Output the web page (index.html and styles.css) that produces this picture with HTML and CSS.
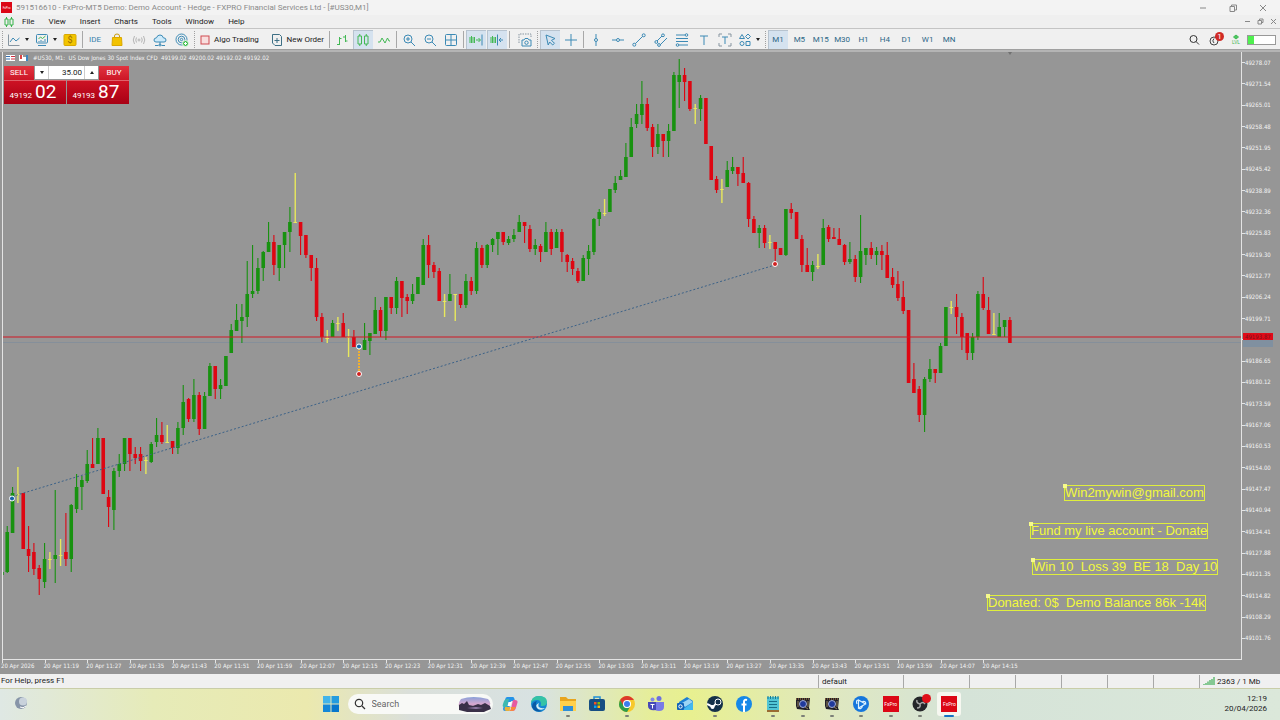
FILE: index.html
```html
<!DOCTYPE html>
<html lang="en">
	<head>
		<meta charset="utf-8">
		<title>FxPro-MT5 Demo - [#US30,M1]</title>
		<link rel="stylesheet" href="styles.css">
	</head>

	<body>
		<header class="titlebar">
			<span class="fxpro fxpro_small">FxPro</span>
			<h1 class="title_text">591516610 - FxPro-MT5 Demo: Demo Account - Hedge - FXPRO Financial Services Ltd - [#US30,M1]</h1>
			<div class="win_controls">
				<button aria-label="Minimize"><svg width="8" height="8"><path d="M1 4h6"/></svg></button>
				<button aria-label="Restore"><svg width="8" height="8"><path d="M1 2.5h4.5v5h-4.5zM2.5 2.5v-1.5h5v5h-2"/></svg></button>
				<button aria-label="Close"><svg width="8" height="8"><path d="M1 1l6 6M7 1l-6 6"/></svg></button>
			</div>
		</header>

		<nav class="menubar">
			<svg class="menu_logo" width="10" height="10"><path d="M1 2h3v6h-3zM6 2h3v6h-3zM2.5 0v2M2.5 8v2M7.5 0v2M7.5 8v2"/></svg>
			<button>File</button>
			<button>View</button>
			<button>Insert</button>
			<button>Charts</button>
			<button>Tools</button>
			<button>Window</button>
			<button>Help</button>
			<div class="doc_controls">
				<button aria-label="Minimize chart"><svg width="7" height="7"><path d="M1 3.5h5"/></svg></button>
				<button aria-label="Restore chart"><svg width="7" height="7"><path d="M1 2.5h3.5v3.5h-3.5zM2.5 2.5v-1.5h3.5v3.5h-1.5"/></svg></button>
				<button aria-label="Close chart"><svg width="7" height="7"><path d="M1 1l5 5M6 1l-5 5"/></svg></button>
			</div>
		</nav>

		<div class="toolbar">
			<span class="grip"></span>
			<div class="tools tools_file">
				<button class="tool tool_drop" aria-label="New chart">
					<svg width="14" height="14"><path class="gray" d="M1.5 1.5v11M1.5 12.5h11"/><path d="M3 9l3-4 3 3 3.5-3"/></svg><i class="arrow"></i>
				</button>
				<button class="tool tool_drop" aria-label="Profiles">
					<svg width="14" height="14"><rect x="1.5" y="1.5" width="11" height="8.5" rx="1"/><path d="M3 12.5h8"/><path class="green" d="M3.5 6l2-2 2 1.5 3-2.5"/><path d="M4 9v-1M6 9v-2M8 9v-1M10 9v-3"/></svg><i class="arrow"></i>
				</button>
				<button class="tool" aria-label="Deposit">
					<svg width="14" height="14"><rect x="1" y="1.5" width="12" height="11" rx="1" fill="#f2c500" stroke="#d9a800"/><text x="7" y="10" text-anchor="middle" class="dollar">$</text></svg>
				</button>
			</div>
			<span class="sep"></span>
			<div class="tools tools_market">
				<button class="tool tool_ide">IDE</button>
				<button class="tool" aria-label="Market">
					<svg width="14" height="14"><path d="M4.5 5v-2q0-2 2.5-2t2.5 2v2" stroke="#c99a10"/><path d="M2.5 4.5h9l.5 8h-10z" fill="#f2c200" stroke="#dba800"/></svg>
				</button>
				<button class="tool" aria-label="Signals">
					<svg width="14" height="14"><g stroke="#b5b5b5"><circle cx="7" cy="7" r="1"/><path d="M4.5 4.5q-1.5 2.5 0 5M9.5 4.5q1.5 2.5 0 5M2.5 3q-2.5 4 0 8M11.5 3q2.5 4 0 8"/></g></svg>
				</button>
				<button class="tool" aria-label="VPS">
					<svg width="14" height="14"><path d="M3 9q-2 0-2-2t2.5-2.2q.8-2.8 3.5-2.8t3.3 2.8q2.7 0 2.7 2.2t-2 2z" fill="#cdeafa"/><path d="M7 9v3M2 12.5h3.5M8.5 12.5h3.5"/><circle cx="7" cy="12" r="1"/></svg>
				</button>
				<button class="tool" aria-label="Network">
					<svg width="14" height="14"><circle cx="6.5" cy="6.5" r="5.5"/><circle cx="6.5" cy="6.5" r="3.3"/><circle cx="6.5" cy="6.5" r="1.2"/><circle cx="10.5" cy="10.5" r="3" fill="#3fc050" stroke="#eaf7ea"/><path d="M9 10.5h3M10.5 9v3" stroke="#fff"/></svg>
				</button>
			</div>
			<span class="grip"></span>
			<div class="tools tools_trade">
				<button class="tool tool_text"><svg width="14" height="14"><rect x="3" y="3" width="8" height="8" fill="#f8dede" stroke="#cf4a50"/></svg>Algo Trading</button>
				<button class="tool tool_text"><svg width="14" height="14"><path d="M2.5 1.5h7l2 2v9h-6.5l-2.5-2.5z" stroke="#3d6f85"/><path d="M7 5v5M4.5 7.5h5" stroke="#3d6f85"/></svg>New Order</button>
			</div>
			<span class="sep"></span>
			<div class="tools tools_3">
				<button class="tool" aria-label="Bar chart"><svg width="14" height="14"><path class="green" d="M4.5 4v8M2 11.5h2.5M4.5 5.5h2M10.5 2v7M8 4h2.5M10.5 8h2"/></svg></button>
				<button class="tool active" aria-label="Candlesticks"><svg width="14" height="14"><path class="green" d="M2 3h3.5v8h-3.5zM8.5 3h3.5v8h-3.5zM3.75 1v2M3.75 11v2M10.25 1v2M10.25 11v2"/></svg></button>
				<button class="tool" aria-label="Line chart"><svg width="14" height="14"><path class="green" d="M1 9h2l2-4 3 5 2.5-5 1.5 3h1"/></svg></button>
			</div>
			<span class="sep"></span>
			<div class="tools tools_3">
				<button class="tool" aria-label="Zoom in"><svg width="14" height="14"><circle cx="6" cy="6" r="4"/><path d="M9 9l4 4M4 6h4M6 4v4"/></svg></button>
				<button class="tool" aria-label="Zoom out"><svg width="14" height="14"><circle cx="6" cy="6" r="4"/><path d="M9 9l4 4M4 6h4"/></svg></button>
				<button class="tool" aria-label="Tile windows"><svg width="14" height="14"><rect x="1.5" y="1.5" width="11" height="11" rx="1"/><path d="M7 1.5v11M1.5 7h11"/></svg></button>
			</div>
			<span class="sep"></span>
			<div class="tools tools_2">
				<button class="tool active" aria-label="Auto scroll"><svg width="14" height="14"><path class="green" d="M1 4v6M2.5 3v7M4 4v6M5.5 4v6M7 7h4M9.5 5l2 2-2 2"/><path d="M13 1.5v11"/></svg></button>
				<button class="tool active" aria-label="Chart shift"><svg width="14" height="14"><path class="green" d="M1 4v6M2.5 3v7M4 4v6M5.5 4v6"/><path d="M7.5 1.5v11M13 7h-4M11 5l-2 2 2 2"/></svg></button>
			</div>
			<span class="sep"></span>
			<div class="tools tools_1">
				<button class="tool" aria-label="Screenshot"><svg width="14" height="14"><path d="M1 10v-9h12v4" stroke-dasharray="1.5 1" class="gray"/><path d="M4 7h2l1-1.5h3l1 1.5h2v6h-9z"/><circle cx="8.5" cy="9.7" r="1.7"/></svg></button>
			</div>
			<span class="grip"></span>
			<div class="tools tools_2">
				<button class="tool active" aria-label="Cursor"><svg width="14" height="14"><path d="M3 2l9 3.5-3.5 1.8 3 3-1.8 1.7-3-3-1.5 3z"/></svg></button>
				<button class="tool" aria-label="Crosshair"><svg width="14" height="14"><path d="M7 1v12M1 7h12"/></svg></button>
			</div>
			<span class="sep"></span>
			<div class="tools tools_draw">
				<button class="tool" aria-label="Vertical line"><svg width="14" height="14"><path d="M7 1v4.5M7 8.5v4.5"/><circle cx="7" cy="7" r="1.5"/></svg></button>
				<button class="tool" aria-label="Horizontal line"><svg width="14" height="14"><path d="M1 7h4.5M8.5 7h4.5"/><circle cx="7" cy="7" r="1.5"/></svg></button>
				<button class="tool" aria-label="Trendline"><svg width="14" height="14"><path d="M3.3 10.7l7.4-7.4"/><circle cx="2.3" cy="11.7" r="1.5"/><circle cx="11.7" cy="2.3" r="1.5"/></svg></button>
				<button class="tool" aria-label="Channel"><svg width="14" height="14"><path d="M3 8l5-5M6 12l7-7"/><circle cx="2.3" cy="9" r="1.4"/><circle cx="9" cy="2.3" r="1.4"/><circle cx="5" cy="12" r="1.4"/></svg></button>
				<button class="tool" aria-label="Fibonacci"><svg width="14" height="14"><path d="M1 2h9M1 5.5h12M1 8.5h12M4 12h9"/><circle cx="11.5" cy="2" r="1.3"/><circle cx="2.5" cy="12" r="1.3"/></svg></button>
				<button class="tool" aria-label="Text"><svg width="14" height="14"><path d="M3 3h8M7 3v9"/></svg></button>
				<button class="tool" aria-label="Text label"><svg width="14" height="14"><path d="M4 4h6M7 4v7"/><path class="gray" d="M1 4v-3h3M10 1h3v3M13 10v3h-3M4 13h-3v-3"/></svg></button>
			</div>
			<button class="tool tool_drop tool_shapes" aria-label="Objects">
				<svg width="14" height="14"><path d="M4 1.5l2.5 4h-5zM10 1l2.5 2.5-2.5 2.5-2.5-2.5zM8 8.5h4v4h-4z"/><circle cx="4" cy="10.5" r="2"/></svg><i class="arrow"></i>
			</button>
			<span class="grip"></span>
			<div class="tools tools_period">
				<button class="tool active">M1</button>
				<button class="tool">M5</button>
				<button class="tool">M15</button>
				<button class="tool">M30</button>
				<button class="tool">H1</button>
				<button class="tool">H4</button>
				<button class="tool">D1</button>
				<button class="tool">W1</button>
				<button class="tool">MN</button>
			</div>
			<div class="tools_right">
				<button class="tool" aria-label="Search"><svg width="14" height="14"><g stroke="#333"><circle cx="6.5" cy="6" r="3.5"/><path d="M9 8.5l3 3"/></g></svg></button>
				<button class="tool tool_bell" aria-label="Notifications"><svg width="14" height="14"><g stroke="#444"><circle cx="6" cy="8" r="4"/><path d="M6 5.5q-2.5 2.5 0 4.5"/></g></svg><span class="badge">1</span></button>
				<div class="lvl"><svg width="8" height="6"><path class="green" d="M4 1l2.5 2-2.5 2-2.5-2z" fill="#48c860"/></svg><span>LVL</span></div>
				<div class="battery"></div>
			</div>
		</div>

		<main class="chart">
			<div class="plot">
				<svg class="candles" id="candles" width="100%" height="100%"></svg>
				<div class="chart_title">
					<svg width="24" height="8"><path d="M1 1h9v6h-9z" fill="#fff"/><path d="M1 2.5h4M1 5h4" stroke="#3570b0"/><path d="M6 2.5h4M6 5h4" stroke="#d03040"/><path d="M14 1h4v6h-4z" fill="#fff"/><path d="M15 1h2v4h-2z" fill="#d44"/><path d="M18 3h3v4h-3z" fill="#fff"/><path d="M21 1h2v6h-2z" fill="#3c86c0"/></svg>
					<span>#US30, M1:&nbsp; US Dow Jones 30 Spot Index CFD&nbsp; 49199.02 49200.02 49192.02 49192.02</span>
				</div>
				<div class="one_click">
					<div class="one_click_top">
						<button class="side">SELL</button>
						<div class="volume">
							<button aria-label="Less"><i class="arrow"></i></button>
							<input type="text" value="35.00" aria-label="Volume">
							<button aria-label="More"><i class="arrow arrow_up"></i></button>
						</div>
						<button class="side">BUY</button>
					</div>
					<div class="one_click_prices">
						<button class="price"><span>49192</span><b>02</b></button>
						<button class="price"><span>49193</span><b>87</b></button>
					</div>
				</div>
				<p class="note note_mail">Win2mywin@gmail.com</p>
				<p class="note note_fund">Fund my live account - Donate</p>
				<p class="note note_stats">Win 10&nbsp; Loss 39&nbsp; BE 18&nbsp; Day 10</p>
				<p class="note note_balance">Donated: 0$&nbsp; Demo Balance 86k -14k</p>
			</div>
			<div class="price_axis">
				<ul class="prices" id="prices"></ul>
				<span class="tag tag_ask">49193.87</span>
				<span class="tag tag_bid"></span>
			</div>
			<ul class="times" id="times"></ul>
		</main>

		<footer class="statusbar">
			<span class="status_help">For Help, press F1</span>
			<span class="cell cell_profile">default</span>
			<span class="cell cell_wide"></span>
			<span class="cell"></span>
			<span class="cell"></span>
			<span class="cell"></span>
			<span class="cell"></span>
			<span class="cell"></span>
			<span class="cell cell_net"><svg width="12" height="8"><path d="M1 8v-1M3 8v-2M5 8v-3.5M7 8v-5M9 8v-6M11 8v-8" stroke="#3fae55" stroke-width="1.2"/></svg>2363 / 1 Mb</span>
		</footer>

		<div class="taskbar">
			<div class="task_left">
				<button class="weather" aria-label="Weather"><svg width="16" height="16"><circle cx="8" cy="8" r="6" fill="#8795a8"/><circle cx="10" cy="6.5" r="4" fill="#c9d2dc"/><path d="M7 12q3 2 6-1" stroke="#fff" fill="none"/></svg></button>
			</div>
			<div class="task_center">
				<button class="task" aria-label="Start"><svg width="16" height="16"><g fill="#1487d8"><path d="M0 0h7.5v7.5h-7.5z" fill="#42b4ea"/><path d="M8.5 0h7.5v7.5h-7.5z" fill="#249cdf"/><path d="M0 8.5h7.5v7.5h-7.5z"/><path d="M8.5 8.5h7.5v7.5h-7.5z" fill="#0876cc"/></g></svg></button>
				<label class="search">
					<svg width="12" height="12"><circle cx="5" cy="5" r="3.7" fill="none" stroke="#333" stroke-width="1.2"/><path d="M8 8l3 3" stroke="#333" stroke-width="1.2"/></svg>
					<input type="text" placeholder="Search" aria-label="Search">
					<svg width="34" height="16"><defs><linearGradient id="dusk" x2="0" y2="1"><stop offset="0" stop-color="#89a0d8"/><stop offset=".5" stop-color="#d9a8cf"/><stop offset="1" stop-color="#4b3f66"/></linearGradient></defs><path d="M3 3q12-4 27 0 4 4 1 8l-5 4q-8 1-15 0l-9-2q-3-5 1-10z" fill="url(#dusk)"/><path d="M1 9l3-2 2 1 3-3 2 4 4 1 5-2 3 1 4-2 5 3 1 3-5 2-4 2h-11l-8-2-4-1z" fill="#3a3048"/><path d="M9 12l9-1 7 1-7 1z" fill="#9079a5"/></svg>
				</label>
				<div class="task_icons">
					<button class="task" aria-label="Copilot"><svg width="16" height="16"><path d="M5 1h6q1 0 1.5 2l.5 2h-4l-2 8q-.5 2-2 2h-2q-2 0-2-2l2-9q.5-3 2-3z" fill="#2593e8"/><path d="M11 4h2q3 0 2.5 2.5l-1.5 5q-.8 3.5-3.5 3.5h-4q2 0 2.5-2z" fill="#e65aa0"/><path d="M1 8l1-3q1-2 3-2h2l-2 8h-3q-2 0-1-3z" fill="#3fb9b0"/><path d="M3 11h5.5l-1 4h-3q-2 0-2-2z" fill="#e8b13a"/><path d="M9 11h5l-1 2q-.5 2-3 2h-3q1.5 0 2-2z" fill="#f98a3a"/><path d="M6.5 6h3.5l-1.5 4h-3z" fill="#fff"/></svg></button>
					<button class="task" aria-label="Edge"><svg width="16" height="16"><circle cx="8" cy="8" r="8" fill="#1588d2"/><path d="M0 8q0-8 8-8 8 0 8 6 0 4-5 4-2 0-1-2 0-4-4-4-5 0-6 4z" fill="#35c3a6"/><path d="M5 8q0 6 6 7-7 2-10-4 0-5 5-6-1 1-1 3z" fill="#0b5aa5"/><path d="M8 7q-3 6 6 5-3 3-7 1-4-4 1-6z" fill="#d6eef5"/></svg></button>
					<button class="task open" aria-label="File Explorer"><svg width="16" height="16"><path d="M0 1h6l2 2h8v11h-16z" fill="#e8a51e"/><path d="M0 5h16v10h-16z" fill="#ffd04c"/><path d="M3 10h10v5h-10z" fill="#2f8fd8"/></svg></button>
					<button class="task" aria-label="Store"><svg width="16" height="16"><path d="M5 4v-3h6v3" fill="none" stroke="#2090d8" stroke-width="1.5"/><rect y="3" width="16" height="12" rx="2" fill="#174e83"/><path d="M5 6h2.5v2.5h-2.5z" fill="#f35325"/><path d="M8.5 6h2.5v2.5h-2.5z" fill="#81bc06"/><path d="M5 9.5h2.5v2.5h-2.5z" fill="#05a6f0"/><path d="M8.5 9.5h2.5v2.5h-2.5z" fill="#ffba08"/></svg></button>
					<button class="task open" aria-label="Chrome"><svg width="16" height="16"><circle cx="8" cy="8" r="8" fill="#f7c92b"/><path d="M1 4q3-4 7-4t7 4h-7l-4 6z" fill="#dc3a2d"/><path d="M1 4q-2 5 0 8 3 4 7 4l3-5-5 1z" fill="#2d9c4b"/><circle cx="8" cy="8" r="4" fill="#fff"/><circle cx="8" cy="8" r="3" fill="#3b7ded"/></svg></button>
					<button class="task" aria-label="Teams"><svg width="16" height="16"><circle cx="4.5" cy="3.5" r="2" fill="#8288e8"/><circle cx="11" cy="2.5" r="2.5" fill="#6c6fe0"/><path d="M5 6h11v5q0 4-5 4t-6-4z" fill="#7a7be6"/><path d="M0 6h8v8q-8 1-8-4z" fill="#4648b8"/><path d="M2.5 8.5h4M4.5 8.5v4" stroke="#fff"/></svg></button>
					<button class="task" aria-label="Outlook"><svg width="16" height="16"><path d="M2 6l8-5 6 4v9h-13z" fill="#1d7fd4"/><path d="M5 7l7-4 4 3-8 5z" fill="#9bd4f5"/><path d="M16 6v8h-11z" fill="#43b8f0"/><rect y="7" width="7" height="7" rx="1" fill="#1262b8"/><circle cx="3.5" cy="10.5" r="1.7" fill="none" stroke="#fff"/></svg></button>
					<button class="task open" aria-label="Steam"><svg width="16" height="16"><circle cx="8" cy="8" r="8" fill="#143049"/><path d="M0 8l6 3 4-5" fill="none" stroke="#fff" stroke-width="2"/><circle cx="11" cy="6" r="3" fill="#143049" stroke="#fff"/><circle cx="5.5" cy="11" r="2" fill="#fff"/></svg></button>
					<button class="task" aria-label="Facebook"><svg width="16" height="16"><circle cx="8" cy="8" r="8" fill="#1688e8"/><path d="M11 4q-3-1-3 2v10M5.5 8.5h5" fill="none" stroke="#fff" stroke-width="2"/></svg></button>
					<button class="task open" aria-label="Notepad"><svg width="16" height="16"><rect x="2" y="1" width="12" height="14" fill="#51c5d4"/><path d="M2 14h12v2h-12z" fill="#9a6b31"/><path d="M4 5.5h8M4 8.5h8M4 11.5h8" stroke="#176f88"/><path d="M3 0v3M5.5 0v3M8 0v3M10.5 0v3M13 0v3" stroke="#167b94"/></svg></button>
					<button class="task open" aria-label="Expert 1"><svg width="16" height="16"><path d="M1 2h14l-1 10 1 2h-5l-8-1-1-3z" fill="#20202a"/><path d="M1 3h14" stroke="#c78743" stroke-dasharray="1 1"/><circle cx="8" cy="8" r="3.5" fill="#203a9c" stroke="#a5afd5"/><path d="M3 5v6M13 5v6M10 11l3 2" stroke="#93815b"/></svg></button>
					<button class="task open" aria-label="Expert 2"><svg width="16" height="16"><path d="M1 2h14l-1 10 1 2h-5l-8-1-1-3z" fill="#20202a"/><path d="M1 3h14" stroke="#c78743" stroke-dasharray="1 1"/><circle cx="8" cy="8" r="3.5" fill="#203a9c" stroke="#a5afd5"/><path d="M3 5v6M13 5v6M10 11l3 2" stroke="#93815b"/></svg></button>
					<button class="task open" aria-label="Battle.net"><svg width="16" height="16"><circle cx="8" cy="8" r="8" fill="#1576dc"/><path d="M5.5 4v8l7-4zM5.5 4q-3 0-1.5 4M5.5 12q2 2 4-1.5M12.5 8q1-3-3-2.5" fill="none" stroke="#dff3ff" stroke-width="1.2"/></svg></button>
					<button class="task open" aria-label="FxPro 1"><span class="fxpro">FxPro</span></button>
					<button class="task open" aria-label="OBS"><svg width="16" height="16"><circle cx="8" cy="8" r="7.5" fill="#25262a"/><path d="M8 8q-4-1-3-4M8 8q3-3 5 0M8 8q1 4-3 4" fill="none" stroke="#a8a8a8" stroke-width="1.5"/></svg><span class="rec"></span></button>
					<button class="task open current" aria-label="FxPro 2"><span class="fxpro">FxPro</span></button>
				</div>
			</div>
			<div class="clock">
				<span>12:19</span>
				<span>20/04/2026</span>
			</div>
		</div>

		<script src="script.js"></script>
	</body>
</html>
```

FILE: styles.css
```css
* {
	box-sizing: border-box;
}
body {
	margin: 0;
	height: 100vh;
	display: flex;
	flex-direction: column;
	overflow: hidden;
	background: #f0f0f0;
	color: #222;
	font-family: Roboto, "Open Sans", sans-serif;
	font-size: 8px;
	line-height: 10px;
}
button, input {
	margin: 0;
	padding: 0;
	border: none;
	background: none;
	color: inherit;
	font: inherit;
	outline: none;
}
ul, p, h1 {
	margin: 0;
	padding: 0;
	list-style: none;
	font-weight: normal;
}
svg {
	display: block;
	flex: none;
}

/* title and menu */
.titlebar {
	display: flex;
	align-items: center;
	height: 15px;
	padding: 0 2px 0 1px;
	background: #f3f3f3;
	color: #8a8a8a;
}
.title_text {
	flex: 1;
	padding-left: 4px;
	font-size: 8px;
	white-space: nowrap;
}
.fxpro {
	display: flex;
	align-items: center;
	justify-content: center;
	width: 16px;
	height: 16px;
	background: #dc0716;
	color: #fff;
	font-size: 5px;
}
.fxpro_small {
	width: 11px;
	height: 11px;
	font-size: 3px;
}
.win_controls, .doc_controls {
	display: flex;
}
.win_controls button {
	display: flex;
	justify-content: center;
	width: 30px;
}
.doc_controls {
	margin-left: auto;
}
.doc_controls button {
	display: flex;
	justify-content: center;
	width: 13px;
}
.win_controls svg, .doc_controls svg {
	fill: none;
	stroke: #888;
}
.menubar {
	display: flex;
	align-items: center;
	gap: 14px;
	height: 14px;
	padding-left: 4px;
	border-bottom: 1px solid #c4c4c4;
	background: #efefef;
}
.menu_logo {
	margin-right: -6px;
	fill: none;
	stroke: #37b34a;
}

/* toolbar */
.toolbar {
	display: flex;
	align-items: center;
	height: 21px;
	padding-top: 1px;
	border-bottom: 1px solid #a0a0a0;
	background: #f0f0f0;
}
.tools {
	display: flex;
	flex: none;
	justify-content: space-between;
}
.tools_file { width: 75px; }
.tools_market { width: 107px; }
.tools_trade { width: 130px; }
.tools_3 { width: 62px; }
.tools_2 { width: 41px; }
.tools_1 {
	width: 23px;
	justify-content: flex-end;
}
.tools_draw { width: 149px; }
.tools_period {
	width: 191px;
	color: #2d6786;
}
.tool {
	display: flex;
	align-items: center;
	justify-content: center;
	flex: none;
	width: 20px;
	height: 19px;
	white-space: nowrap;
}
.tool svg, .lvl svg {
	fill: none;
	stroke: #3c8ab5;
}
.tool .green, .lvl .green {
	stroke: #43b854;
}
.tool .gray {
	stroke: #8795a0;
}
.tool .dollar {
	fill: #9a6b00;
	stroke: none;
	font-size: 9px;
}
.tool_drop {
	width: 26px;
	gap: 4px;
}
.tool_shapes {
	width: 28px;
}
.tool_text {
	width: auto;
	gap: 2px;
	padding: 0 3px 0 1px;
	color: #222;
}
.tool_ide {
	color: #3580ac;
}
.active {
	background: #d5e2ef;
	box-shadow: inset 1px 1px 0 #b7c3cf;
}
.arrow {
	border: 2px solid transparent;
	border-top: 3px solid #222;
	border-bottom: none;
}
.arrow_up {
	border-top: none;
	border-bottom: 3px solid #222;
}
.sep, .grip {
	flex: none;
	width: 3px;
	height: 17px;
	margin-left: 2px;
	border-left: 1px solid #a8a8a8;
}
.grip {
	border-left: 1px dotted #a0a0a0;
}
.tools_right {
	display: flex;
	align-items: center;
	margin-left: auto;
	padding-right: 4px;
	gap: 1px;
}
.tool_bell {
	position: relative;
}
.badge {
	position: absolute;
	top: 2px;
	right: 1px;
	width: 9px;
	height: 9px;
	border-radius: 5px;
	background: #d02a25;
	color: #fff;
	line-height: 9px;
}
.lvl {
	display: flex;
	flex-direction: column;
	align-items: center;
	width: 20px;
	color: #43b854;
	font-size: 5px;
	line-height: 5px;
}
.battery {
	width: 29px;
	height: 10px;
	border: 1px solid #999;
	background: linear-gradient(to right, #4ff04f 6px, #fff 6px);
}

/* chart */
.chart {
	flex: 1;
	display: grid;
	grid-template-columns: 1fr 38px;
	grid-template-rows: 1fr 14px;
	min-height: 0;
	padding-left: 2px;
	border-top: 2px solid #b4b4b4;
	background: #969696;
	color: #f4f4f4;
	font-family: "DejaVu Sans Condensed", "DejaVu Sans", sans-serif;
	font-size: 6px;
	line-height: 8px;
}
.plot {
	position: relative;
	border: 1px solid #e4e4e4;
	border-top: none;
}
.candles {
	position: absolute;
	left: 0;
	top: 0;
}
.up { fill: #189210; }
.down { fill: #de0612; }
.flat { fill: #e8e85c; }
.ask_line { stroke: #d01825; }
.bid_line { stroke: #858f9a; }
.trade_line {
	stroke: #3c6288;
	stroke-dasharray: 2 2;
}
.stop_line {
	stroke: #f0b030;
	stroke-width: 2;
	stroke-dasharray: 2 1;
}
.mark_buy { fill: #1765a8; stroke: #fff; }
.mark_sell { fill: #d02020; stroke: #fff; }
.chart_title {
	position: relative;
	display: flex;
	align-items: center;
	gap: 4px;
	padding: 2px 0 0 2px;
	white-space: nowrap;
}
.one_click {
	position: relative;
	width: 125px;
	margin: 4px 0 0 1px;
	color: #fff;
	font-family: Roboto, "Open Sans", sans-serif;
	font-size: 8px;
}
.one_click_top, .one_click_prices {
	display: flex;
}
.side {
	flex: none;
	width: 30px;
	height: 14px;
	background: linear-gradient(#e23440, #cc1626);
}
.volume {
	flex: 1;
	display: flex;
	min-width: 0;
	height: 13px;
	margin: 0 1px;
	background: #fff;
	color: #222;
}
.volume button {
	display: flex;
	align-items: center;
	justify-content: center;
	flex: none;
	width: 13px;
}
.volume input {
	flex: 1;
	min-width: 0;
	padding-right: 2px;
	border: 1px solid #ccc;
	border-width: 0 1px;
	text-align: right;
}
.one_click_prices {
	gap: 1px;
}
.price {
	flex: 1;
	display: flex;
	align-items: baseline;
	justify-content: center;
	gap: 3px;
	height: 24px;
	padding-right: 4px;
	border-top: 1px solid #e0606a;
	background: linear-gradient(#cd1224, #a80014);
	line-height: 22px;
}
.price b {
	font-size: 19px;
	font-weight: normal;
}
.note {
	position: absolute;
	height: 16px;
	border: 1px solid #dfee3c;
	color: #f2f93c;
	font-family: "Liberation Sans", Arial, sans-serif;
	font-size: 13px;
	line-height: 14px;
	white-space: nowrap;
}
.note::before {
	content: "";
	position: absolute;
	left: -2px;
	top: -2px;
	width: 4px;
	height: 4px;
	background: #f6fa8c;
}
.note_mail { left: 1061px; top: 433px; }
.note_fund { left: 1027px; top: 471px; }
.note_stats { left: 1029px; top: 507px; }
.note_balance { left: 984px; top: 543px; }

.price_axis {
	position: relative;
	padding-bottom: 11px;
}
.prices {
	display: grid;
	grid-auto-rows: 1fr;
	height: 100%;
}
.prices li {
	display: flex;
	align-items: center;
}
.prices li::before {
	content: "";
	width: 3px;
	border-top: 1px solid #e4e4e4;
}
.tag {
	position: absolute;
	left: 1px;
	width: 30px;
	height: 7px;
	padding-left: 2px;
	line-height: 7px;
}
.tag_ask {
	top: 281px;
	background: #e00a18;
	color: #7a1018;
}
.tag_bid {
	top: 288px;
	background: #8090a0;
}
.times {
	display: flex;
	width: 1024px;
	margin-left: -1px;
}
.times li {
	flex: 1;
	position: relative;
	padding-top: 2px;
	white-space: nowrap;
}
.times li::before {
	content: "";
	position: absolute;
	left: 1px;
	top: 0;
	height: 3px;
	border-left: 1px solid #e4e4e4;
}

/* status bar */
.statusbar {
	display: flex;
	align-items: center;
	height: 14px;
	background: #f0f0f0;
}
.status_help {
	flex: 1;
	padding-left: 1px;
}
.cell {
	width: 46px;
	height: 13px;
	padding-left: 3px;
	border-left: 1px solid #a8a8a8;
	line-height: 13px;
}
.cell_profile { width: 85px; }
.cell_wide { width: 66px; }
.cell_net {
	display: flex;
	align-items: center;
	gap: 2px;
	width: 81px;
}

/* taskbar */
.taskbar {
	display: grid;
	grid-template-columns: 1fr auto 1fr;
	align-items: center;
	height: 32px;
	padding-bottom: 1px;
	border-top: 1px solid #c9cda8;
	background: linear-gradient(to right, #dfe8e4 0, #e6ebb8 12%, #ebe9ae 24%, #dadfda 32%, #d8e2e2 42%, #e6ee98 51%, #e8f090 54%, #dfe8c0 65%, #d5e3d8 75%, #dbe8da 100%);
}
.weather {
	margin-left: 13px;
}
.task_center {
	display: flex;
	align-items: center;
	gap: 5px;
}
.task {
	position: relative;
	display: flex;
	align-items: center;
	justify-content: center;
	width: 24px;
	height: 24px;
	border-radius: 3px;
}
.search {
	display: flex;
	align-items: center;
	gap: 6px;
	width: 145px;
	height: 20px;
	padding: 0 1px 0 6px;
	border-radius: 10px;
	background: #f8f9f6;
}
.search input {
	flex: 1;
	min-width: 0;
	font-size: 9px;
}
.search input::placeholder {
	color: #666;
}
.task_icons {
	display: flex;
	justify-content: space-between;
	width: 464px;
}
.open::after {
	content: "";
	position: absolute;
	bottom: -1px;
	left: 10px;
	width: 4px;
	height: 2px;
	border-radius: 1px;
	background: #7c8078;
}
.current {
	background: #f6f7f0;
}
.current::after {
	left: 7px;
	width: 10px;
	background: #1672c4;
}
.rec {
	position: absolute;
	top: 2px;
	right: 1px;
	width: 9px;
	height: 9px;
	border-radius: 5px;
	background: #e00f18;
}
.clock {
	display: flex;
	flex-direction: column;
	align-items: flex-end;
	padding-right: 13px;
}
```

FILE: script.js
```js
// candle rows: direction, high, body top, body bottom, low (window y)
var candles = [
	'u 572 572 575 575', 'u 526 532 572 573', 'u 487 493 533 533', 'f 467 494 494 503', 'd 493 493 549 549',
	'd 526 549 556 572', 'd 543 552 569 575', 'd 565 568 579 595', 'u 543 559 582 588', 'f 552 559 559 569',
	'u 490 555 559 583', 'f 539 555 555 566', 'd 513 552 559 566', 'u 504 505 559 572', 'u 474 487 509 513',
	'u 476 480 487 510', 'u 450 464 481 483', 'd 438 464 468 468', 'u 428 438 464 464', 'd 438 438 494 494',
	'd 490 497 507 527', 'u 468 471 510 530', 'u 454 464 471 477', 'u 438 438 464 471', 'd 438 438 454 471',
	'd 447 454 458 464', 'd 447 454 461 471', 'f 457 460 460 474', 'u 442 444 462 463', 'u 418 435 442 447',
	'd 422 435 442 444', 'f 425 442 442 442', 'd 441 441 448 454', 'u 422 428 448 454', 'u 385 402 428 435',
	'd 398 399 419 422', 'u 379 395 419 422', 'd 392 395 429 435', 'u 392 396 429 429', 'u 363 366 396 396',
	'd 366 366 389 399', 'u 379 385 389 399', 'u 356 356 386 386', 'u 324 330 353 353', 'u 304 320 331 331',
	'u 304 317 321 343', 'u 261 294 317 327', 'u 245 291 294 298', 'u 258 268 291 294', 'u 251 252 268 281',
	'u 222 242 252 252', 'd 235 242 265 275', 'u 245 245 268 281', 'u 232 232 245 268', 'u 207 222 232 252',
	'f 173 222 222 222', 'd 222 222 236 255', 'd 235 235 255 258', 'd 255 255 268 281', 'd 258 268 317 321',
	'd 313 317 337 342', 'f 330 338 338 343', 'u 320 323 337 337', 'f 317 323 323 331', 'd 313 323 337 337',
	'f 329 337 337 357', 'd 330 337 347 347', 'f 346 346 346 350', 'u 323 340 350 350', 'u 333 333 341 355',
	'u 297 310 334 334', 'd 307 310 331 337', 'u 297 297 331 340', 'd 297 297 308 314', 'u 277 281 308 314',
	'd 281 281 298 317', 'd 294 297 301 314', 'u 284 294 301 304', 'u 277 277 294 294', 'u 239 245 285 285',
	'd 235 245 265 278', 'd 262 265 272 278', 'd 268 271 301 301', 'f 294 301 301 317', 'u 274 294 301 301',
	'f 294 294 294 321', 'd 294 294 305 308', 'u 274 281 305 308', 'd 277 281 291 295', 'u 242 248 291 294',
	'd 245 248 265 268', 'u 244 245 265 268', 'u 238 239 245 252', 'u 232 232 239 255', 'd 232 232 242 245',
	'u 236 239 243 245', 'u 229 235 239 242', 'u 215 222 232 232', 'd 222 222 226 243', 'd 225 229 249 252',
	'u 239 245 249 255', 'd 244 246 252 262', 'u 222 232 252 252', 'd 229 232 249 255', 'u 229 232 248 248',
	'd 229 232 252 262', 'd 254 255 262 272', 'd 258 261 269 275', 'd 268 271 281 283', 'u 255 258 281 281',
	'u 245 251 259 275', 'u 218 219 252 255', 'u 209 212 219 226', 'f 199 213 213 216', 'u 189 189 212 212',
	'u 176 183 190 193', 'u 170 176 180 180', 'u 143 157 177 177', 'u 118 127 157 157', 'u 104 114 124 128',
	'u 81 104 115 124', 'd 98 104 128 131', 'd 124 127 147 157', 'u 124 134 147 154', 'd 134 134 141 157',
	'u 124 131 141 157', 'u 72 75 131 131', 'u 59 75 82 108', 'd 68 75 82 101', 'd 81 81 109 111',
	'f 104 108 108 124', 'u 95 98 109 121', 'd 98 98 144 144', 'd 146 146 180 180', 'd 176 179 190 193',
	'f 179 189 189 203', 'u 161 170 187 187', 'u 157 167 171 174', 'd 167 167 174 186', 'd 157 173 183 183',
	'd 182 183 219 227', 'd 216 219 233 233', 'u 225 228 233 248', 'd 225 228 243 248', 'f 235 242 242 249',
	'd 242 242 249 262', 'd 248 248 255 255', 'u 209 209 255 256', 'd 203 209 213 219', 'd 212 212 239 239',
	'd 235 239 265 272', 'd 248 265 272 272', 'u 261 265 272 281', 'f 254 266 266 269', 'u 219 228 265 265',
	'd 225 227 239 242', 'd 228 237 239 239', 'd 228 239 245 245', 'd 244 245 262 265', 'u 242 259 262 264',
	'd 255 259 277 282', 'u 215 251 277 283', 'u 248 248 255 265', 'd 242 248 255 259', 'u 247 251 255 265',
	'd 245 251 255 270', 'd 242 255 278 278', 'd 268 277 285 288', 'd 271 284 298 301', 'd 281 297 311 314',
	'd 310 310 383 383', 'd 363 379 393 393', 'd 386 389 415 422', 'u 377 379 415 432', 'u 359 369 379 382',
	'd 369 369 373 383', 'u 343 346 373 373', 'u 307 307 346 346', 'f 301 307 307 314', 'd 294 307 317 334',
	'd 313 317 337 350', 'd 333 333 353 360', 'u 333 337 353 360', 'u 291 294 337 340', 'd 277 294 308 310',
	'd 297 310 334 334', 'f 313 334 334 334', 'u 313 327 337 337', 'u 320 320 327 337', 'd 317 320 343 343'
];
var names = { u: 'up', d: 'down', f: 'flat' };
var step = 16 / 3;
var left = 3, top0 = 52;

function rect(cls, x, y, w, h) {
	return '<rect class="' + cls + '" x="' + x.toFixed(2) + '" y="' + y + '" width="' + w + '" height="' + h + '"/>';
}
function mark(cls, x, y) {
	return '<circle class="' + cls + '" cx="' + x + '" cy="' + y + '" r="2.5"/>';
}

var out = '<line class="bid_line" x1="0" x2="100%" y1="290.5" y2="290.5"/>';
candles.forEach(function (row, i) {
	var c = row.split(' ');
	var x = 1.9 + i * step - left;
	var high = c[1] - top0, a = c[2] - top0, b = c[3] - top0, low = c[4] - top0;
	var wick = c[0] == 'f' ? 1.4 : 1.1;
	out += rect(names[c[0]], x - wick / 2, high, wick, low - high);
	out += rect(names[c[0]], x - 1.8, a, 3.6, Math.max(b - a, 1));
});
out += '<line class="ask_line" x1="0" x2="100%" y1="285" y2="285"/>';
out += '<line class="trade_line" x1="9" y1="444.5" x2="772" y2="213"/>';
out += '<line class="stop_line" x1="356" y1="296" x2="356" y2="320"/>';
out += mark('mark_buy', 9, 446.5) + mark('mark_buy', 356, 294.5);
out += mark('mark_sell', 356, 322) + mark('mark_sell', 772, 212);
out += '<path d="M1005 0h4l-2 3z" fill="#707070"/>';
document.getElementById('candles').innerHTML = out;

// row 13 stays empty, the ask tag sits there
var prices = '';
for (var i = 0; i < 28; i++) {
	prices += '<li>' + (i == 13 ? '' : (49278.07 - i * 6.53).toFixed(2)) + '</li>';
}
document.getElementById('prices').innerHTML = prices;

var times = '<li>20 Apr 2026</li>';
for (var m = 679; m <= 855; m += 8) {
	times += '<li>20 Apr ' + Math.floor(m / 60) + ':' + ('0' + m % 60).slice(-2) + '</li>';
}
document.getElementById('times').innerHTML = times;
```
